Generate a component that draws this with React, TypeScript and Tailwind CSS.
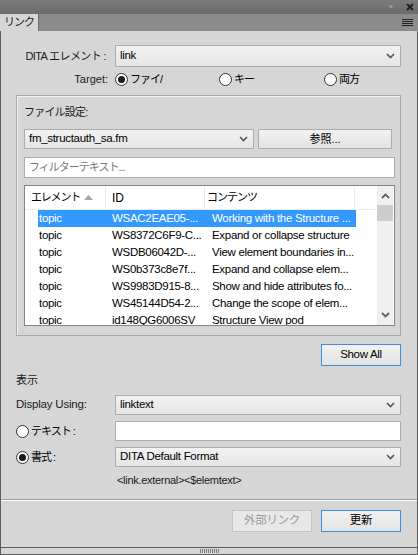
import { ReactNode } from 'react';

const FONT = { fontFamily: '"Liberation Sans", "Noto Sans CJK JP", sans-serif' } as const;

const ROWS = [
  ['topic', 'WSAC2EAE05-...', 'Working with the Structure ...'],
  ['topic', 'WS8372C6F9-C...', 'Expand or collapse structure'],
  ['topic', 'WSDB06042D-...', 'View element boundaries in...'],
  ['topic', 'WS0b373c8e7f...', 'Expand and collapse elem...'],
  ['topic', 'WS9983D915-8...', 'Show and hide attributes fo...'],
  ['topic', 'WS45144D54-2...', 'Change the scope of elem...'],
  ['topic', 'id148QG6006SV', 'Structure View pod'],
] as const;

function Chevron() {
  return (
    <svg width="9" height="6" viewBox="0 0 9 6" className="shrink-0">
      <path d="M1 1l3.5 3.5L8 1" fill="none" stroke="#555" strokeWidth="1.6" />
    </svg>
  );
}

function Select({ value, className = '' }: { value: string; className?: string }) {
  return (
    <div
      className={`flex items-center justify-between border border-[#acacac] bg-gradient-to-b from-[#f2f2f2] to-[#e5e5e5] pl-[4px] pr-[5px] text-[11.5px] tracking-[-0.3px] text-black ${className}`}
    >
      <span className="whitespace-nowrap">{value}</span>
      <Chevron />
    </div>
  );
}

function Radio({ checked, children }: { checked?: boolean; children: ReactNode }) {
  return (
    <div className="flex items-center gap-[2px] whitespace-nowrap text-[11px] tracking-[-1px] text-black">
      <span className="flex h-[13px] w-[13px] shrink-0 items-center justify-center rounded-full border border-[#333] bg-white">
        {checked && <span className="h-[7px] w-[7px] rounded-full bg-[#1a1a1a]" />}
      </span>
      <span>{children}</span>
    </div>
  );
}

function Button({ label, focused, disabled }: { label: string; focused?: boolean; disabled?: boolean }) {
  return (
    <div
      className={`flex h-[22px] w-[80px] items-center justify-center border text-[11.5px] tracking-[-0.3px] ${
        focused
          ? 'border-[#3c8fe0] bg-gradient-to-b from-[#f2f2f2] to-[#e3e3e3] text-black'
          : disabled
            ? 'border-[#c4c4c4] bg-[#e8e8e8] text-[#9a9a9a]'
            : 'border-[#acacac] bg-gradient-to-b from-[#f2f2f2] to-[#e3e3e3] text-black'
      }`}
    >
      {label}
    </div>
  );
}

export default function App() {
  return (
    <div className="flex h-[555px] w-[418px] flex-col bg-[#5e5e5e]" style={FONT}>
      {/* Title strip */}
      <div className="flex h-[14px] items-center justify-end gap-[14px] bg-gradient-to-b from-[#7a7a7a] to-[#6c6c6c] pr-[4px]">
        <span className="text-[8px] leading-none tracking-[-1px] text-[#b8b8b8]">&lsaquo;&lsaquo;</span>
        <svg width="8" height="8" viewBox="0 0 8 8">
          <path d="M1 1l6 6M7 1l-6 6" stroke="#1e1e1e" strokeWidth="2" />
        </svg>
      </div>
      {/* Tab bar */}
      <div className="flex h-[17px] items-stretch justify-between bg-[#8c8c8c]">
        <div className="flex w-[39px] items-center justify-center border-r border-[#6a6a6a] bg-[#d6d6d6] text-[11px] tracking-[-1px] text-[#1a1a1a]">
          リンク
        </div>
        <div className="flex flex-col justify-center gap-[1px] pr-[5px]">
          <span className="h-[1px] w-[11px] bg-[#222]" />
          <span className="h-[1px] w-[11px] bg-[#222]" />
          <span className="h-[1px] w-[11px] bg-[#222]" />
          <span className="h-[1px] w-[11px] bg-[#222]" />
        </div>
      </div>
      {/* Body */}
      <div className="mx-[1px] flex flex-1 flex-col bg-[#d6d6d6] pl-[15px] pr-[16px]">
        <div className="mt-[14px] flex h-[22px] items-center">
          <div className="w-[99px] shrink-0 whitespace-nowrap pr-[9px] text-right text-[11px] tracking-[-0.6px] text-[#1a1a1a]">DITA エレメント :</div>
          <Select value="link" className="h-[22px] flex-1" />
        </div>
        <div className="mt-[5px] flex h-[14px] items-center">
          <div className="w-[99px] shrink-0 pr-[7px] text-right text-[11px] text-[#1a1a1a]">Target:</div>
          <div className="w-[104px] shrink-0"><Radio checked>ファイ/</Radio></div>
          <div className="w-[105px] shrink-0"><Radio>キー</Radio></div>
          <Radio>両方</Radio>
        </div>

        {/* File group */}
        <div className="mt-[9px] flex h-[241px] flex-col border border-[#a9a9a9] pl-[7px] pr-[5px] shadow-[inset_1px_1px_0_#f4f4f4]">
          <div className="mt-[9px] h-[15px] text-[11px] leading-[15px] tracking-[-0.8px] text-[#1a1a1a]">ファイル設定:</div>
          <div className="mt-[9px] flex h-[20px] gap-[4px]">
            <Select value="fm_structauth_sa.fm" className="w-[230px] shrink-0" />
            <div className="flex w-[134px] items-center justify-center border border-[#acacac] bg-gradient-to-b from-[#f2f2f2] to-[#e3e3e3] text-[11px] text-black">
              参照...
            </div>
          </div>
          <div className="mt-[8px] flex h-[21px] items-center border border-[#acacac] bg-white pl-[4px] text-[11px] tracking-[-1px] text-[#777]">
            フィルターテキスト...
          </div>
          {/* Table */}
          <div className="mt-[7px] flex h-[141px] border border-[#858585] bg-white">
            <div className="flex min-w-0 flex-1 flex-col overflow-hidden">
              <div className="flex h-[24px] shrink-0 items-center border-b border-[#e8eef6] whitespace-nowrap text-[11px] text-black">
                <div className="flex h-full w-[81px] shrink-0 items-center justify-between border-r border-[#e4ebf3] pl-[6px] pr-[12px]">
                  <span className="tracking-[-1.2px]">エレメント</span>
                  <svg width="9" height="5" viewBox="0 0 9 5" className="shrink-0">
                    <path d="M0 5L4.5 0L9 5Z" fill="#a6a6a6" />
                  </svg>
                </div>
                <div className="flex h-full w-[99px] shrink-0 items-center border-r border-[#e4ebf3] pl-[6px] text-[12px]">ID</div>
                <div className="flex h-full w-[150px] shrink-0 items-center border-r border-[#e4ebf3] pl-[2px] tracking-[-1px]">コンテンツ</div>
              </div>
              <div className="flex flex-col">
                {ROWS.map(([el, id, content], i) => (
                  <div
                    key={id}
                    className={`ml-[13px] flex h-[17px] w-[318px] shrink-0 items-center overflow-hidden whitespace-nowrap text-[11.5px] tracking-[-0.3px] ${
                      i === 0 ? 'bg-[#3399ff] text-white' : 'text-black'
                    }`}
                  >
                    <span className="w-[74px] shrink-0 pl-[1px]">{el}</span>
                    <span className="w-[100px] shrink-0 overflow-hidden">{id}</span>
                    <span className="w-[142px] shrink-0 overflow-hidden">{content}</span>
                  </div>
                ))}
              </div>
            </div>
            <div className="mr-[1px] flex w-[16px] shrink-0 flex-col items-center justify-between bg-[#f0f0f0] py-[7px]">
              <div className="flex w-full flex-col items-center">
                <svg width="9" height="6" viewBox="0 0 9 6">
                  <path d="M1 5l3.5-3.5L8 5" fill="none" stroke="#606060" strokeWidth="1.8" />
                </svg>
                <div className="mt-[6px] h-[16px] w-full bg-[#cdcdcd]" />
              </div>
              <svg width="9" height="6" viewBox="0 0 9 6">
                <path d="M1 1l3.5 3.5L8 1" fill="none" stroke="#606060" strokeWidth="1.8" />
              </svg>
            </div>
          </div>
        </div>

        <div className="mt-[8px] flex justify-end">
          <Button label="Show All" focused />
        </div>
        <div className="mt-[7px] h-[14px] text-[11px] leading-[14px] text-[#1a1a1a]">表示</div>
        <div className="mt-[8px] flex h-[20px] items-center">
          <div className="w-[99px] shrink-0 whitespace-nowrap text-[11.5px] tracking-[-0.2px] text-[#1a1a1a]">Display Using:</div>
          <Select value="linktext" className="h-[20px] flex-1" />
        </div>
        <div className="mt-[6px] flex h-[20px] items-center">
          <div className="w-[99px] shrink-0"><Radio>テキスト :</Radio></div>
          <div className="h-[20px] flex-1 border border-[#acacac] bg-white" />
        </div>
        <div className="mt-[6px] flex h-[20px] items-center">
          <div className="w-[99px] shrink-0"><Radio checked>書式 :</Radio></div>
          <Select value="DITA Default Format" className="h-[20px] flex-1" />
        </div>
        <div className="mt-[6px] pl-[101px] text-[11px] leading-[14px] tracking-[-0.3px] text-[#1a1a1a]">&lt;link.external&gt;&lt;$elemtext&gt;</div>
        <div className="-ml-[15px] -mr-[16px] mt-[12px] h-[2px] border-b border-white bg-[#9e9e9e]" />
        <div className="mt-[9px] flex justify-end gap-[9px]">
          <Button label="外部リンク" disabled />
          <Button label="更新" focused />
        </div>
      </div>
      {/* Bottom grip */}
      <div className="mx-[1px] mt-[1px] flex h-[6px] items-center justify-center bg-[#d6d6d6]">
        <div className="flex gap-[1px]">
          {Array.from({ length: 10 }).map((_, i) => (
            <span key={i} className="h-[4px] w-[1px] bg-[#808080]" />
          ))}
        </div>
      </div>
      <div className="h-[1px]" />
    </div>
  );
}
